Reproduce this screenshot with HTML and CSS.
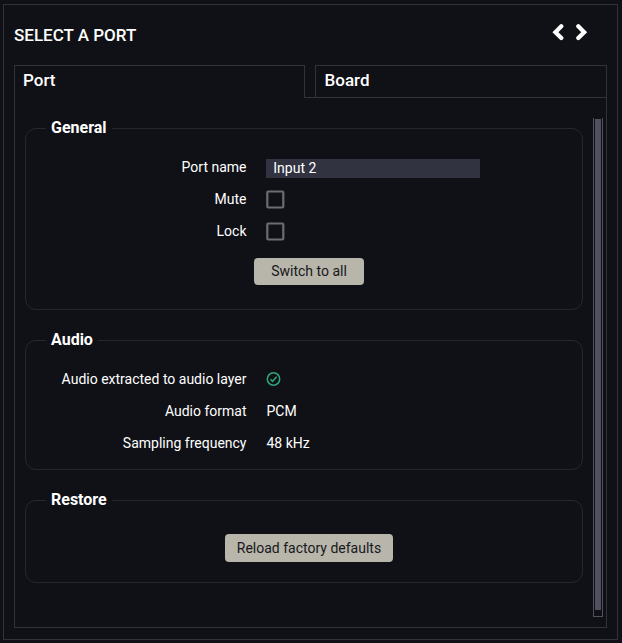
FILE: index.html
```html
<!DOCTYPE html>
<html lang="en">
<head>
<meta charset="utf-8">
<title>Select a port</title>
<link rel="stylesheet" href="styles.css">
</head>
<body>
<main class="panel">
  <header class="head">
    <h1>SELECT A PORT</h1>
    <nav class="arrows">
      <svg width="13" height="18" viewBox="0 0 13 18"><path d="M9.300 2.300 3.400 8.200 9.300 14.100"/></svg>
      <svg width="13" height="18" viewBox="0 0 13 18"><path d="M3.300 2.300 9.200 8.200 3.300 14.100"/></svg>
    </nav>
  </header>
  <div class="tabs">
    <div class="tab active">Port</div>
    <div class="spacer"></div>
    <div class="tab board">Board</div>
  </div>
  <div class="content">
    <div class="sections">
      <fieldset class="general">
        <legend><span>General</span></legend>
        <div class="row"><label>Port name</label><div class="value"><input type="text" value="Input 2"></div></div>
        <div class="row"><label>Mute</label><div class="value"><svg class="check" width="19" height="19" viewBox="0 0 19 19"><rect x="1.300" y="1.500" width="16" height="16" rx="1"/></svg></div></div>
        <div class="row"><label>Lock</label><div class="value"><svg class="check" width="19" height="19" viewBox="0 0 19 19"><rect x="1.300" y="1.500" width="16" height="16" rx="1"/></svg></div></div>
        <button class="switch">Switch to all</button>
      </fieldset>
      <fieldset class="audio">
        <legend><span>Audio</span></legend>
        <div class="row"><label>Audio extracted to audio layer</label><div class="value"><svg class="ok" width="16" height="16" viewBox="0 0 16 16"><circle cx="7.500" cy="8" r="6.200"/><path d="M4.500 8.200 6.600 10.300 10.600 5.800"/></svg></div></div>
        <div class="row"><label>Audio format</label><div class="value text">PCM</div></div>
        <div class="row"><label>Sampling frequency</label><div class="value text">48 kHz</div></div>
      </fieldset>
      <fieldset class="restore">
        <legend><span>Restore</span></legend>
        <button class="reload">Reload factory defaults</button>
      </fieldset>
    </div>
    <div class="scroll"><div class="thumb"></div></div>
  </div>
</main>
</body>
</html>
```
FILE: styles.css
```css
* { box-sizing: border-box; }
body {
  margin: 0;
  padding: 4px 4px 3px 3px;
  height: 643px;
  background: #101116;
  color: #fff;
  font: 14px/20px Roboto, sans-serif;
  overflow: hidden;
}
.panel {
  height: 636px;
  border: 1px solid #333;
  padding: 0 10px 11px;
  display: flex;
  flex-direction: column;
}
.head {
  height: 60px;
  flex: none;
  display: flex;
  justify-content: space-between;
}
h1 {
  margin: 20px 0 0;
  font-size: 17px;
  line-height: 20px;
  font-weight: 500;
}
.arrows { display: flex; gap: 10px; padding: 19px 19px 0 0; }
.arrows svg { fill: none; stroke: #fff; stroke-width: 4.2; stroke-linecap: round; stroke-linejoin: miter; }
.tabs { display: flex; height: 33px; flex: none; }
.tab {
  width: 292px;
  border: 1px solid #333;
  padding: 4px 8px;
  font-size: 17px;
  font-weight: 500;
}
.tab.active { width: 291px; border-bottom: 0; }
.tab.board { padding-left: 8.500px; }
.spacer { width: 10px; border-bottom: 1px solid #333; }
.content {
  flex: 1;
  border: 1px solid #333;
  border-top: 0;
  padding: 20px 3px 10px 10px;
  display: flex;
  justify-content: space-between;
}
.sections { width: 558px; padding-top: 1px; display: flex; flex-direction: column; gap: 21px; }
fieldset {
  margin: 0;
  min-width: 0;
  padding: 13px 0 0;
  border: 1px solid #26272b;
  border-radius: 11px;
}
legend {
  margin-left: 20px;
  padding: 0 5px;
  font-size: 16px;
  height: 19px;
  font-weight: 700;
}
legend span { display: block; line-height: 17px; }
.general { height: 191px; }
.audio { height: 139px; }
.restore { height: 92px; padding-top: 24px; }
.row { display: flex; height: 32px; gap: 19.500px; align-items: center; }
label { width: 220.500px; text-align: right; white-space: nowrap; }
.value { display: flex; align-items: center; }
.value.text { padding-left: 0.500px; }
input {
  width: 214px;
  height: 19px;
  margin-top: 3px;
  border: 0;
  padding: 0 7px 1px 7.300px;
  background: #323340;
  color: #fff;
  font: inherit;
}
.check { fill: none; stroke: #6c6d71; stroke-width: 2.2; }
.ok { fill: none; stroke: #2fa678; stroke-width: 1.5; }
button {
  display: block;
  border: 0;
  padding: 0 0 1px;
  border-radius: 4px;
  background: #b8b5ab;
  color: #17181c;
  font: inherit;
}
.switch { width: 110px; height: 27px; margin: 11px 0 0 228px; }
.reload { width: 168px; height: 28px; margin-left: 199px; padding: 0; }
.scroll {
  width: 10px;
  height: 499px;
  border: 1px solid #50515c;
  border-top: 0;
  padding: 1px 1px 6px;
}
.thumb { height: 491px; background: #50515f; }
```
